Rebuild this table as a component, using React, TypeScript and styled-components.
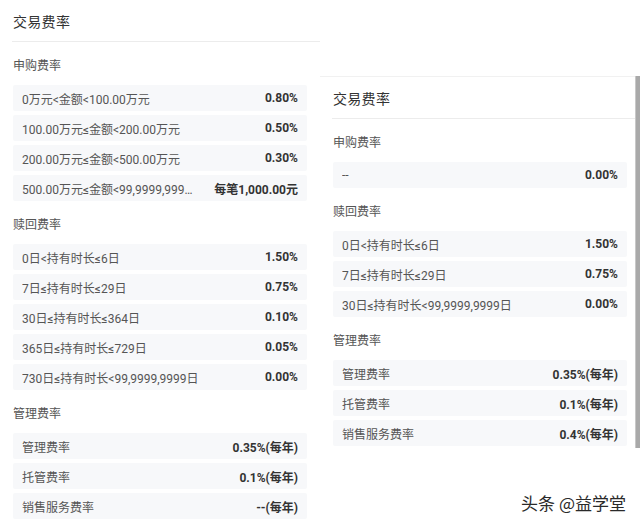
import React from "react";
import styled, { createGlobalStyle } from "styled-components";

const Global = createGlobalStyle`
  html, body { margin: 0; padding: 0; background: #ffffff; }
  body {
    width: 640px; height: 524px; overflow: hidden;
    font-family: Roboto, "Noto Sans CJK SC", "Noto Sans", sans-serif;
    -webkit-font-smoothing: antialiased;
  }
`;

const Page = styled.div`
  position: relative;
  display: flex;
  align-items: flex-start;
  width: 640px;
  height: 524px;
  background: #fff;
`;

const Panel = styled.div<{ $top: number }>`
  display: flex;
  width: 320px;
  margin-top: ${(p) => p.$top}px;
  border-top: 1px solid #f1f1f1;
  background: #fff;
`;

const Content = styled.div<{ $pr: number }>`
  flex: 1;
  min-width: 0;
  padding-left: 13px;
  padding-bottom: 2px;
  display: flex;
  flex-direction: column;
  & > section { padding-right: ${(p) => p.$pr}px; }
`;

const Header = styled.div`
  height: 41px;
  display: flex;
  align-items: center;
  border-bottom: 1px solid #ececec;
  margin-left: -1px;
  padding-left: 1px;
  font-size: 14px;
  color: #333;
  letter-spacing: 0.3px;
`;

const Section = styled.section`
  display: flex;
  flex-direction: column;
  gap: 4px;
`;

const SectionTitle = styled.div`
  font-size: 12px;
  line-height: 16px;
  color: #555;
  padding: 16px 0 7px;
`;

const Row = styled.div`
  height: 26px;
  display: flex;
  align-items: center;
  justify-content: space-between;
  gap: 16px;
  padding: 0 9px;
  background: #f7f8fa;
  border-radius: 2px;
  font-size: 12px;
`;

const Label = styled.span`
  flex: 1;
  min-width: 0;
  white-space: nowrap;
  overflow: hidden;
  text-overflow: ellipsis;
  color: #555;
`;

const Value = styled.span`
  flex-shrink: 0;
  font-weight: 700;
  color: #333;
  white-space: nowrap;
`;

const Scrollbar = styled.div`
  width: 4px;
  align-self: stretch;
  margin-top: -1px;
  background: #a9a9a9;
  border-left: 1px solid #c8c8c8;
`;

const Watermark = styled.div`
  position: absolute;
  right: 14px;
  bottom: 9px;
  font-size: 17px;
  color: #2a2a2a;
  font-family: "Noto Sans CJK SC", sans-serif;
  text-shadow: 0 0 2px #fff, 0 0 2px #fff;
`;

type Item = [string, string];
type Group = { title: string; rows: Item[] };

const leftGroups: Group[] = [
  {
    title: "申购费率",
    rows: [
      ["0万元<金额<100.00万元", "0.80%"],
      ["100.00万元≤金额<200.00万元", "0.50%"],
      ["200.00万元≤金额<500.00万元", "0.30%"],
      ["500.00万元≤金额<99,9999,9999万元", "每笔1,000.00元"],
    ],
  },
  {
    title: "赎回费率",
    rows: [
      ["0日<持有时长≤6日", "1.50%"],
      ["7日≤持有时长≤29日", "0.75%"],
      ["30日≤持有时长≤364日", "0.10%"],
      ["365日≤持有时长≤729日", "0.05%"],
      ["730日≤持有时长<99,9999,9999日", "0.00%"],
    ],
  },
  {
    title: "管理费率",
    rows: [
      ["管理费率", "0.35%(每年)"],
      ["托管费率", "0.1%(每年)"],
      ["销售服务费率", "--(每年)"],
    ],
  },
];

const rightGroups: Group[] = [
  { title: "申购费率", rows: [["--", "0.00%"]] },
  {
    title: "赎回费率",
    rows: [
      ["0日<持有时长≤6日", "1.50%"],
      ["7日≤持有时长≤29日", "0.75%"],
      ["30日≤持有时长<99,9999,9999日", "0.00%"],
    ],
  },
  {
    title: "管理费率",
    rows: [
      ["管理费率", "0.35%(每年)"],
      ["托管费率", "0.1%(每年)"],
      ["销售服务费率", "0.4%(每年)"],
    ],
  },
];

function FeeContent({ groups, pr }: { groups: Group[]; pr: number }) {
  return (
    <Content $pr={pr}>
      <Header>交易费率</Header>
      {groups.map((g) => (
        <Section key={g.title}>
          <SectionTitle>{g.title}</SectionTitle>
          {g.rows.map(([l, v]) => (
            <Row key={l}>
              <Label>{l}</Label>
              <Value>{v}</Value>
            </Row>
          ))}
        </Section>
      ))}
    </Content>
  );
}

export default function App() {
  return (
    <>
      <Global />
      <Page>
        <Panel $top={-1}>
          <FeeContent groups={leftGroups} pr={13} />
        </Panel>
        <Panel $top={76}>
          <FeeContent groups={rightGroups} pr={8} />
          <Scrollbar />
        </Panel>
        <Watermark>头条 @益学堂</Watermark>
      </Page>
    </>
  );
}
